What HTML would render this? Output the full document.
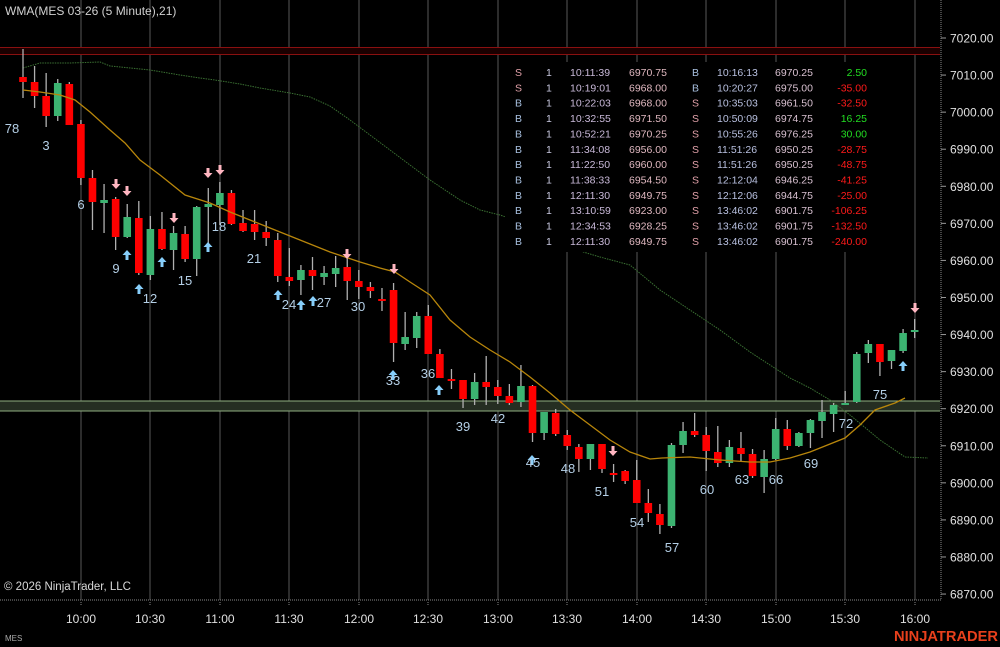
<!DOCTYPE html>
<html><head><meta charset="utf-8">
<style>
html,body{margin:0;padding:0;background:#000;width:1000px;height:647px;overflow:hidden}
svg{display:block}
text{font-family:"Liberation Sans",sans-serif}
</style></head>
<body>
<svg id="s" width="1000" height="647" xmlns="http://www.w3.org/2000/svg"></svg>
<script>
const s=document.getElementById('s');let h='';
const gx=[81,150,220,289,359,428,498,567,637,706,776,845,915];
gx.forEach(x=>{h+=`<line x1="${x}" y1="0" x2="${x}" y2="600" stroke="#3a3a3a" stroke-width="1.5"/>`});
h+=`<rect x="0" y="47" width="940" height="8" fill="#1a0000"/><line x1="0" y1="47.5" x2="940" y2="47.5" stroke="#8a1010"/><line x1="0" y1="54.5" x2="940" y2="54.5" stroke="#8a1010"/>`;
h+=`<rect x="0" y="401" width="940" height="10" fill="#252e22"/><line x1="0" y1="401" x2="940" y2="401" stroke="#8fae80"/><line x1="0" y1="411" x2="940" y2="411" stroke="#8fae80"/>`;
const g=[[23,68],[40,63],[70,63],[100,62],[110,66],[130,68],[150,70],[180,75],[200,78],[215,80],[240,84],[260,88],[290,93],[310,97],[330,106],[350,120],[370,135],[390,150],[410,165],[430,180],[460,200],[480,210],[500,215],[520,222],[545,237],[570,248],[600,257],[630,265],[660,290],[690,310],[720,330],[750,352],[770,365],[790,378],[810,388],[830,400],[850,415],[880,440],[905,457],[928,458]];
h+=`<polyline points="${g.map(p=>p.join(',')).join(' ')}" fill="none" stroke="#3a7032" stroke-width="1" stroke-dasharray="1.5 1"/>`;
h+=`<rect x="505" y="62" width="378" height="190" fill="#000"/>`;
const C=[[49,98,77,82],[66,108,82,96],[73,127,96,116],[79,121,116,83],[82,125,84,125],[120,185,124,178],[170,230,178,202],[184,233,203,200],[197,250,199,237],[204,238,237,217],[201,275,218,273],[216,280,275,229],[212,250,229,249],[226,270,250,233],[226,262,234,259],[206,276,259,207],[188,250,207,204],[182,225,205,193],[190,225,193,224],[210,232,223,231],[210,240,224,232],[221,246,232,238],[233,282,240,276],[248,286,277,281],[265,295,280,270],[257,290,270,276],[266,285,277,273],[256,287,274,268],[258,300,267,281],[270,299,281,287],[282,298,287,291],[288,311,299,300],[283,362,290,343],[312,350,344,337],[312,348,338,316],[305,354,316,354],[349,377,354,378],[369,389,379,380],[380,408,380,399],[373,405,399,382],[356,405,382,387],[380,404,387,396],[384,405,396,403],[365,407,402,386],[385,442,386,433],[412,440,433,412],[409,436,413,434],[430,450,435,446],[444,472,447,459],[444,470,459,444],[444,473,444,469],[464,482,473,474],[470,484,471,481],[460,503,480,503],[489,522,503,513],[504,534,514,525],[443,528,526,445],[422,453,445,431],[413,437,431,435],[427,471,435,451],[426,467,452,463],[440,467,463,447],[432,461,448,454],[449,478,454,476],[450,493,477,459],[418,460,459,429],[420,450,429,446],[432,447,446,433],[419,448,433,420],[400,438,421,412],[403,432,414,405],[391,405,404,403],[352,403,402,354],[340,363,353,344],[344,376,344,362],[350,369,361,350],[329,353,351,333],[319,338,331,330]];
C.forEach((c,i)=>{const x=23+i*11.58;const [hi,lo,o,cl]=c;const up=cl<=o;
h+=`<line x1="${x}" y1="${hi}" x2="${x}" y2="${lo}" stroke="#b0b0b0" stroke-width="1.3"/>`;
const t=Math.min(o,cl),b=Math.max(Math.max(o,cl),t+2);
h+=`<rect x="${x-3.8}" y="${t}" width="7.6" height="${b-t}" fill="${up?'#3cb371':'#ff0000'}"/>`;});
const w=[[23,90],[40,92],[60,95],[75,100],[90,112],[110,130],[125,143],[140,160],[160,175],[185,195],[210,203],[230,212],[250,220],[270,228],[300,240],[330,252],[360,262],[380,268],[395,272],[410,282],[430,295],[450,320],[470,337],[490,350],[510,362],[530,377],[550,393],[570,410],[590,425],[610,440],[630,452],[650,459],[662,458],[690,457],[720,460],[750,462],[770,462],[790,458],[810,452],[845,438],[860,425],[875,410],[895,403],[905,398]];
h+=`<polyline points="${w.map(p=>p.join(',')).join(' ')}" fill="none" stroke="#b8860b" stroke-width="1.3"/>`;
const dn=[[116,186],[127,193],[174,220],[208,175],[220,172],[347,256],[394,271],[613,453],[915,310]];
dn.forEach(([x,y])=>{h+=`<path d="M${x-1.5} ${y-7}h3v5h3l-4.5 5l-4.5-5h3z" fill="#ffb6c1"/>`});
const upA=[[127,253],[139,287],[162,260],[208,245],[278,293],[301,303],[313,299],[393,373],[439,388],[532,458],[903,364]];
upA.forEach(([x,y])=>{h+=`<path d="M${x-1.5} ${y+7}h3v-5h3l-4.5-5l-4.5 5h3z" fill="#87cefa"/>`});
const L=[[78,12,128],[3,46,145],[6,81,204],[9,116,268],[12,150,298],[15,185,280],[18,219,226],[21,254,258],[24,289,304],[27,324,302],[30,358,306],[33,393,380],[36,428,373],[39,463,426],[42,498,418],[45,533,462],[48,568,468],[51,602,491],[54,637,522],[57,672,547],[60,707,489],[63,742,479],[66,776,479],[69,811,463],[72,846,423],[75,880,394]];
L.forEach(([n,x,y])=>{h+=`<text x="${x}" y="${y+5}" fill="#b4cfe6" font-size="13" text-anchor="middle">${n}</text>`});
const T=[["S","10:11:39","6970.75","B","10:16:13","6970.25","2.50"],["S","10:19:01","6968.00","B","10:20:27","6975.00","-35.00"],["B","10:22:03","6968.00","S","10:35:03","6961.50","-32.50"],["B","10:32:55","6971.50","S","10:50:09","6974.75","16.25"],["B","10:52:21","6970.25","S","10:55:26","6976.25","30.00"],["B","11:34:08","6956.00","S","11:51:26","6950.25","-28.75"],["B","11:22:50","6960.00","S","11:51:26","6950.25","-48.75"],["B","11:38:33","6954.50","S","12:12:04","6946.25","-41.25"],["B","12:11:30","6949.75","S","12:12:06","6944.75","-25.00"],["B","13:10:59","6923.00","S","13:46:02","6901.75","-106.25"],["B","12:34:53","6928.25","S","13:46:02","6901.75","-132.50"],["B","12:11:30","6949.75","S","13:46:02","6901.75","-240.00"]];
T.forEach((r,i)=>{const y=76+i*15.35;const sc=s=>s=='S'?'#e0a0a8':'#a8c0e0';
h+=`<g font-size="10.5"><text x="515" y="${y}" fill="${sc(r[0])}">${r[0]}</text><text x="546" y="${y}" fill="#c8c8e0">1</text><text x="570" y="${y}" fill="#c8b8d8">${r[1]}</text><text x="629" y="${y}" fill="#e0b8c0">${r[2]}</text><text x="692" y="${y}" fill="${sc(r[3])}">${r[3]}</text><text x="717" y="${y}" fill="#b8c0e0">${r[4]}</text><text x="775" y="${y}" fill="#d8c0d0">${r[5]}</text><text x="867" y="${y}" fill="${r[6][0]=='-'?'#ff1a1a':'#22dd22'}" text-anchor="end">${r[6]}</text></g>`;});
h+=`<line x1="941" y1="0" x2="941" y2="600" stroke="#888" stroke-dasharray="1 1"/>`;
for(let i=0;i<16;i++){const y=38+i*37.07;h+=`<line x1="941" y1="${y}" x2="946" y2="${y}" stroke="#999"/><text x="950" y="${y+4.5}" fill="#e0e0e0" font-size="12">${(7020-i*10).toFixed(2)}</text>`}
h+=`<line x1="0" y1="600" x2="941" y2="600" stroke="#888" stroke-dasharray="1 1"/>`;
const tl=["10:00","10:30","11:00","11:30","12:00","12:30","13:00","13:30","14:00","14:30","15:00","15:30","16:00"];
gx.forEach((x,i)=>{h+=`<line x1="${x}" y1="602" x2="${x}" y2="606" stroke="#888" stroke-dasharray="1 1"/><text x="${x}" y="623" fill="#e0e0e0" font-size="12" text-anchor="middle">${tl[i]}</text>`});
h+=`<text x="5" y="15" fill="#d0d0d0" font-size="12">WMA(MES 03-26 (5 Minute),21)</text>`;
h+=`<text x="4" y="590" fill="#d8d8d8" font-size="11.5">© 2026 NinjaTrader, LLC</text>`;
h+=`<text x="5" y="641" fill="#aaa" font-size="8">MES</text>`;
h+=`<text x="998" y="641" fill="#e8401c" font-size="15" font-weight="bold" text-anchor="end" textLength="104" lengthAdjust="spacingAndGlyphs">NINJATRADER</text>`;
s.innerHTML=h;
</script>
</body></html>
